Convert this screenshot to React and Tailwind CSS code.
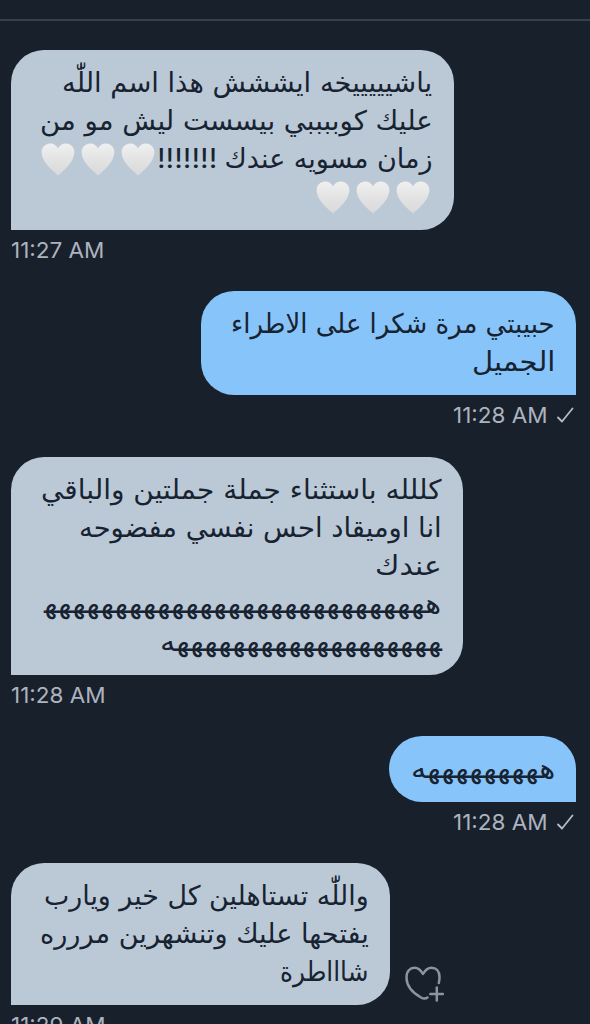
import { useLayoutEffect, useRef, useState } from 'react';

const messages = [
  {
    side: 'in', time: '11:27 AM', timeWidth: 93, box: 'w-[443px] h-[180px]',
    lines: [
      { text: 'ياشيييييخه ايششش هذا اسم اللّٰه', width: 370 },
      { text: 'عليك كوببببي بيسست ليش مو من', width: 393 },
      { text: 'زمان مسويه عندك', width: 208, marks: '!!!!!!!', hearts: 3 },
      { hearts: 3 },
    ],
  },
  {
    side: 'out', time: '11:28 AM', timeWidth: 95, box: 'w-[375.5px] h-[104px]',
    lines: [
      { text: 'حبيبتي مرة شكرا على الاطراء', width: 324 },
      { text: 'الجميل', width: 83 },
    ],
  },
  {
    side: 'in', time: '11:28 AM', timeWidth: 95, box: 'w-[452px] h-[218px]',
    lines: [
      { text: 'كللله باستثناء جملة جملتين والباقي', width: 401 },
      { text: 'انا اوميقاد احس نفسي مفضوحه', width: 363 },
      { text: 'عندك', width: 67 },
      { text: 'ه'.repeat(28) + '\u200d', width: 397 },
      { text: '\u200d' + 'ه'.repeat(20), width: 282 },
    ],
  },
  {
    side: 'out', time: '11:28 AM', timeWidth: 95, box: 'w-[187px] h-[65.5px]',
    lines: [{ text: 'ه'.repeat(10), width: 144 }],
  },
  {
    side: 'in', time: '11:29 AM', timeWidth: 95, box: 'w-[379px] h-[142px]', react: true,
    lines: [
      { text: 'واللّٰه تستاهلين كل خير ويارب', width: 325 },
      { text: 'يفتحها عليك وتنشهرين مررره', width: 329 },
      { text: 'شاااطرة', width: 88 },
    ],
  },
];

function FittedText({ text, width, origin = 'origin-right' }) {
  const ref = useRef(null);
  const [scale, setScale] = useState(1);
  useLayoutEffect(() => {
    setScale(width / ref.current.offsetWidth);
  }, [text, width]);
  return (
    <span className="block shrink-0" style={{ width }}>
      <span ref={ref} className={`inline-block whitespace-nowrap ${origin}`} style={{ transform: `scaleX(${scale})` }}>
        {text}
      </span>
    </span>
  );
}

function WhiteHeart() {
  return (
    <svg viewBox="0 0 34 34" className="h-[34px] w-[34px] shrink-0">
      <defs>
        <linearGradient id="heart" x1="0" y1="0" x2="0" y2="1">
          <stop offset="0" stopColor="#f1f0f0" />
          <stop offset="0.5" stopColor="#e4e3e3" />
          <stop offset="1" stopColor="#d9d9db" />
        </linearGradient>
      </defs>
      <path fill="url(#heart)" d="M17 33.500C13 29.500 1 21 .6 10.500C.5 5 4.500 1.500 9.300 1.500C13 1.500 15.600 3.500 17 6.500C18.400 3.500 21 1.500 24.700 1.500C29.500 1.500 33.500 5 33.400 10.500C33 21 21 29.500 17 33.500Z" />
    </svg>
  );
}

function Hearts({ count, className }) {
  return (
    <span className={`flex shrink-0 gap-[6px] ${className}`}>
      {Array.from({ length: count }, (_, i) => <WhiteHeart key={i} />)}
    </span>
  );
}

function HeartPlus() {
  return (
    <svg viewBox="0 0 40 36" className="mb-[3px] ml-[14px] h-9 w-10" fill="none" stroke="#8b95a2" strokeWidth="2.5" strokeLinecap="round" strokeLinejoin="round">
      <path d="M23.500 31.500C21.500 33 19.500 33 17 31.500C9 27 2.500 20 2.500 11.500C2.500 5 6 1.800 10.500 1.800C14 1.800 16.500 3.500 19 8C21.500 3.500 24 1.800 27.500 1.800C32 1.800 35.500 5 35.500 11C35.500 13 35.300 15 34.800 17" />
      <path d="M32.800 21.500V34.500M26.300 28H39" />
    </svg>
  );
}

function Message({ side, time, timeWidth, box, lines, react }) {
  const incoming = side === 'in';
  return (
    <div className={`flex shrink-0 flex-col ${incoming ? 'items-start' : 'items-end'}`}>
      <div className="flex items-end">
        <div
          dir="rtl"
          className={`${box} flex flex-col px-[21px] py-[14px] font-['DejaVu_Sans',sans-serif] text-[27px] leading-[38px] text-[#182331] ${
            incoming ? 'rounded-[33px] rounded-bl-none bg-[#bbc9d7]' : 'rounded-[33px] rounded-br-none bg-[#87c4fa]'
          }`}
        >
          {lines.map((line, i) => (
            <div key={i} className="flex h-[38px] shrink-0 items-center">
              {line.text && <FittedText text={line.text} width={line.width} />}
              {line.marks && (
                <span className="mr-[7px] font-['Inter',sans-serif] text-[27px]">
                  <FittedText text={line.marks} width={60} />
                </span>
              )}
              {line.hearts && <Hearts count={line.hearts} className="mr-[3px]" />}
            </div>
          ))}
        </div>
        {react && <HeartPlus />}
      </div>
      <div className={`flex h-[61.5px] items-start pt-[6px] font-['Inter',sans-serif] text-[22px] leading-[28px] text-[#adb3be] ${incoming ? 'pl-[0.5px]' : ''}`}>
        <FittedText text={time} width={timeWidth} origin="origin-left" />
        {!incoming && (
          <svg viewBox="0 0 18 18" className="mt-[5px] mr-[2px] ml-[8px] h-[18px] w-[18px]" fill="none" stroke="#b4bcc6" strokeWidth="1.8" strokeLinecap="round" strokeLinejoin="round">
            <path d="M2 11.500L6 15.500L16.500 2.500" />
          </svg>
        )}
      </div>
    </div>
  );
}

export default function App() {
  return (
    <main className="flex h-[1024px] w-[590px] flex-col overflow-hidden bg-[#18202c]">
      <div className="h-[21px] shrink-0 border-b-2 border-[#38404c]" />
      <div className="flex flex-col pt-[28.5px] pr-[14px] pl-[10.5px]">
        {messages.map((message, i) => <Message key={i} {...message} />)}
      </div>
    </main>
  );
}
